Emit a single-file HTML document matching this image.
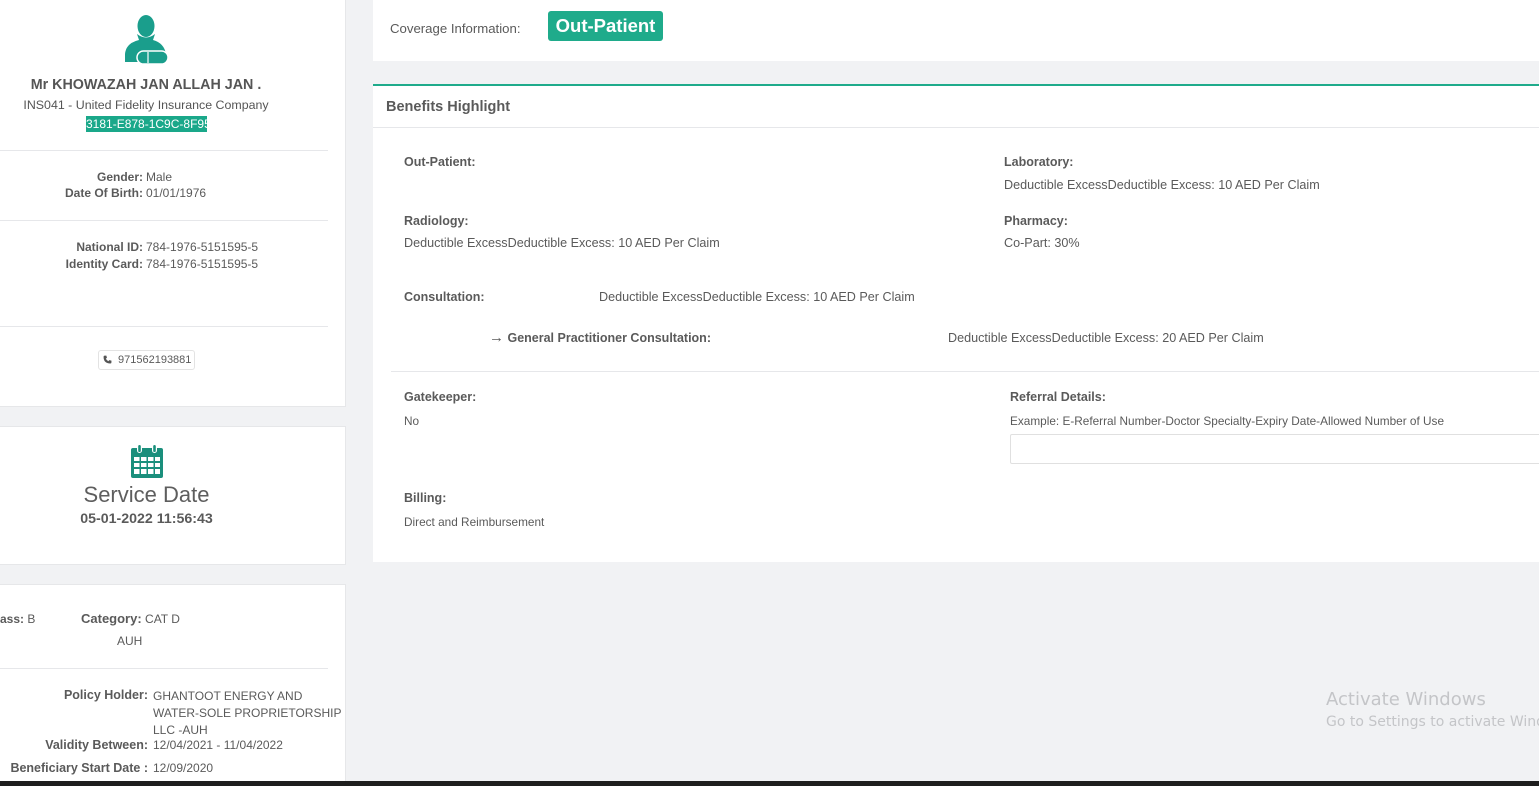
<!DOCTYPE html>
<html><head><meta charset="utf-8"><style>
*{margin:0;padding:0;box-sizing:border-box}
body{width:1539px;height:786px;background:#f1f2f4;font-family:"Liberation Sans",Arial,sans-serif;color:#5a5a5a;position:relative;overflow:hidden;font-size:12px}
.a{position:absolute;white-space:nowrap}
.p{position:absolute;background:#fff;border-right:1px solid #e6e7e9;border-bottom:1px solid #e6e7e9}
.b{font-weight:bold}
.hr{position:absolute;height:1px;background:#e6e7ea}
.r{text-align:right}
.v{font-size:12.6px}
</style></head><body>
<div class="p" style="left:0;top:0;width:346px;height:407px"></div>
<div class="p" style="left:0;top:426px;width:346px;height:139px;border-top:1px solid #e6e7e9"></div>
<div class="p" style="left:0;top:584px;width:346px;height:200px;border-top:1px solid #e6e7e9"></div>
<svg class="a" style="left:122px;top:14px" width="48" height="52" viewBox="0 0 48 52">
<ellipse cx="24" cy="12" rx="8.5" ry="11" fill="#1a9e8c"/>
<path d="M15 20 L17 26 Q4 29 3 40 L3 48 L44 48 L44 40 Q42 29 31 26 L33 20 Q24 27 15 20Z" fill="#1a9e8c"/>
<rect x="15" y="37" width="31" height="13" rx="6.5" fill="#1a9e8c" stroke="#fff" stroke-width="1.5"/>
<line x1="26" y1="38" x2="26" y2="49" stroke="#fff" stroke-width="1.2"/>
</svg>
<div class="a b" style="left:0;width:292px;top:77px;text-align:center;font-size:14.3px;color:#555">Mr KHOWAZAH JAN ALLAH JAN .</div>
<div class="a" style="left:0;width:292px;top:98px;text-align:center;color:#555;font-size:12.4px">INS041 - United Fidelity Insurance Company</div>
<div class="a" style="left:86px;top:116px;width:121px;height:16px;background:#1aa88a;color:#fff;font-size:12px;line-height:16px;text-align:center;overflow:hidden">3181-E878-1C9C-8F95</div>
<div class="hr" style="left:0;top:150px;width:328px"></div>
<div class="a r b" style="right:1396px;top:170px">Gender:</div><div class="a" style="left:146px;top:170px">Male</div>
<div class="a r b" style="right:1396px;top:186px">Date Of Birth:</div><div class="a" style="left:146px;top:186px">01/01/1976</div>
<div class="hr" style="left:0;top:220px;width:328px"></div>
<div class="a r b" style="right:1396px;top:240px">National ID:</div><div class="a" style="left:146px;top:240px">784-1976-5151595-5</div>
<div class="a r b" style="right:1396px;top:257px">Identity Card:</div><div class="a" style="left:146px;top:257px">784-1976-5151595-5</div>
<div class="hr" style="left:0;top:326px;width:328px"></div>
<div class="a" style="left:98px;top:350px;width:97px;height:20px;border:1px solid #e3e3e3;border-radius:3px;font-size:11px;line-height:18px;padding-left:19px">971562193881</div>
<svg class="a" style="left:103px;top:355px" width="9" height="9" viewBox="0 0 16 16"><path d="M3 1 L6 1 L7 5 L5 6.5 Q6.5 9.5 9.5 11 L11 9 L15 10 L15 13 Q15 15 13 15 Q7 15 4 12 Q1 9 1 3 Q1 1 3 1Z" fill="#555"/></svg>
<svg class="a" style="left:130px;top:444px" width="34" height="35" viewBox="0 0 34 35">
<rect x="1" y="4" width="32" height="30" rx="2" fill="#1a8f7c"/>
<g fill="#fff"><rect x="4" y="13" width="5.5" height="4"/><rect x="11" y="13" width="5.5" height="4"/><rect x="18" y="13" width="5.5" height="4"/><rect x="25" y="13" width="5" height="4"/>
<rect x="4" y="19" width="5.5" height="4"/><rect x="11" y="19" width="5.5" height="4"/><rect x="18" y="19" width="5.5" height="4"/><rect x="25" y="19" width="5" height="4"/>
<rect x="4" y="25" width="5.5" height="5"/><rect x="11" y="25" width="5.5" height="5"/><rect x="18" y="25" width="5.5" height="5"/><rect x="25" y="25" width="5" height="5"/>
<rect x="7" y="0" width="5" height="9" rx="2.5"/><rect x="22" y="0" width="5" height="9" rx="2.5"/></g>
<rect x="8.2" y="1" width="2.6" height="7" rx="1.3" fill="#1a8f7c"/><rect x="23.2" y="1" width="2.6" height="7" rx="1.3" fill="#1a8f7c"/>
</svg>
<div class="a" style="left:0;width:293px;top:482px;text-align:center;font-size:22px;color:#5e5e5e">Service Date</div>
<div class="a b" style="left:0;width:293px;top:511px;text-align:center;font-size:14.2px">05-01-2022 11:56:43</div>
<div class="a" style="left:0;top:612px"><span class="b">ass:</span> B</div>
<div class="a" style="left:81px;top:611px"><span class="b" style="font-size:13px">Category:</span> CAT D</div>
<div class="a" style="left:117px;top:634px">AUH</div>
<div class="hr" style="left:0;top:668px;width:328px"></div>
<div class="a r b" style="right:1391px;top:688px;font-size:12.5px">Policy Holder:</div>
<div class="a" style="left:153px;top:688px;line-height:17px">GHANTOOT ENERGY AND<br>WATER-SOLE PROPRIETORSHIP<br>LLC -AUH</div>
<div class="a r b" style="right:1391px;top:738px;font-size:12.5px">Validity Between:</div><div class="a" style="left:153px;top:738px">12/04/2021 - 11/04/2022</div>
<div class="a r b" style="right:1391px;top:761px;font-size:12.5px">Beneficiary Start Date :</div><div class="a" style="left:153px;top:761px">12/09/2020</div>

<div class="a" style="left:373px;top:0;width:1166px;height:61px;background:#fff"></div>
<div class="a" style="left:390px;top:21px;font-size:13.2px">Coverage Information:</div>
<div class="a b" style="left:548px;top:11px;width:115px;height:30px;background:#1fab8b;color:#fff;border-radius:3px;font-size:18.5px;line-height:30px;text-align:center">Out-Patient</div>

<div class="a" style="left:373px;top:84px;width:1166px;height:478px;background:#fff;border-top:2px solid #1fab8b"></div>
<div class="a b" style="left:386px;top:99px;font-size:14.5px">Benefits Highlight</div>
<div class="hr" style="left:373px;top:127px;width:1166px"></div>
<div class="a b" style="left:404px;top:155px;font-size:12.5px">Out-Patient:</div>
<div class="a b" style="left:1004px;top:155px;font-size:12.5px">Laboratory:</div>
<div class="a v" style="left:1004px;top:178px">Deductible ExcessDeductible Excess: 10 AED Per Claim</div>
<div class="a b" style="left:404px;top:214px;font-size:12.5px">Radiology:</div>
<div class="a v" style="left:404px;top:236px">Deductible ExcessDeductible Excess: 10 AED Per Claim</div>
<div class="a b" style="left:1004px;top:214px;font-size:12.5px">Pharmacy:</div>
<div class="a v" style="left:1004px;top:236px">Co-Part: 30%</div>
<div class="a b" style="left:404px;top:290px;font-size:12.5px">Consultation:</div>
<div class="a v" style="left:599px;top:290px">Deductible ExcessDeductible Excess: 10 AED Per Claim</div>
<div class="a b" style="left:489px;top:331px;font-size:12.5px"><span style="font-size:15px;line-height:12px">&#x2192;</span> General Practitioner Consultation:</div>
<div class="a v" style="left:948px;top:331px">Deductible ExcessDeductible Excess: 20 AED Per Claim</div>
<div class="hr" style="left:391px;top:371px;width:1148px"></div>
<div class="a b" style="left:404px;top:390px;font-size:12.5px">Gatekeeper:</div>
<div class="a" style="left:404px;top:414px;font-size:11.8px">No</div>
<div class="a b" style="left:1010px;top:390px;font-size:12.5px">Referral Details:</div>
<div class="a" style="left:1010px;top:414px;font-size:11.8px">Example: E-Referral Number-Doctor Specialty-Expiry Date-Allowed Number of Use</div>
<div class="a" style="left:1010px;top:434px;width:540px;height:30px;border:1px solid #e0e0e0;border-radius:2px"></div>
<div class="a b" style="left:404px;top:491px;font-size:12.5px">Billing:</div>
<div class="a" style="left:404px;top:515px;font-size:11.8px">Direct and Reimbursement</div>

<div class="a" style="left:1326px;top:689px;font-size:18px;color:#c4c5c8;font-family:'DejaVu Sans',sans-serif">Activate Windows</div>
<div class="a" style="left:1326px;top:714px;font-size:14px;color:#c4c5c8;font-family:'DejaVu Sans',sans-serif">Go to Settings to activate Windows.</div>
<div class="a" style="left:0;top:781px;width:1539px;height:5px;background:#1e1e1e"></div>
</body></html>
